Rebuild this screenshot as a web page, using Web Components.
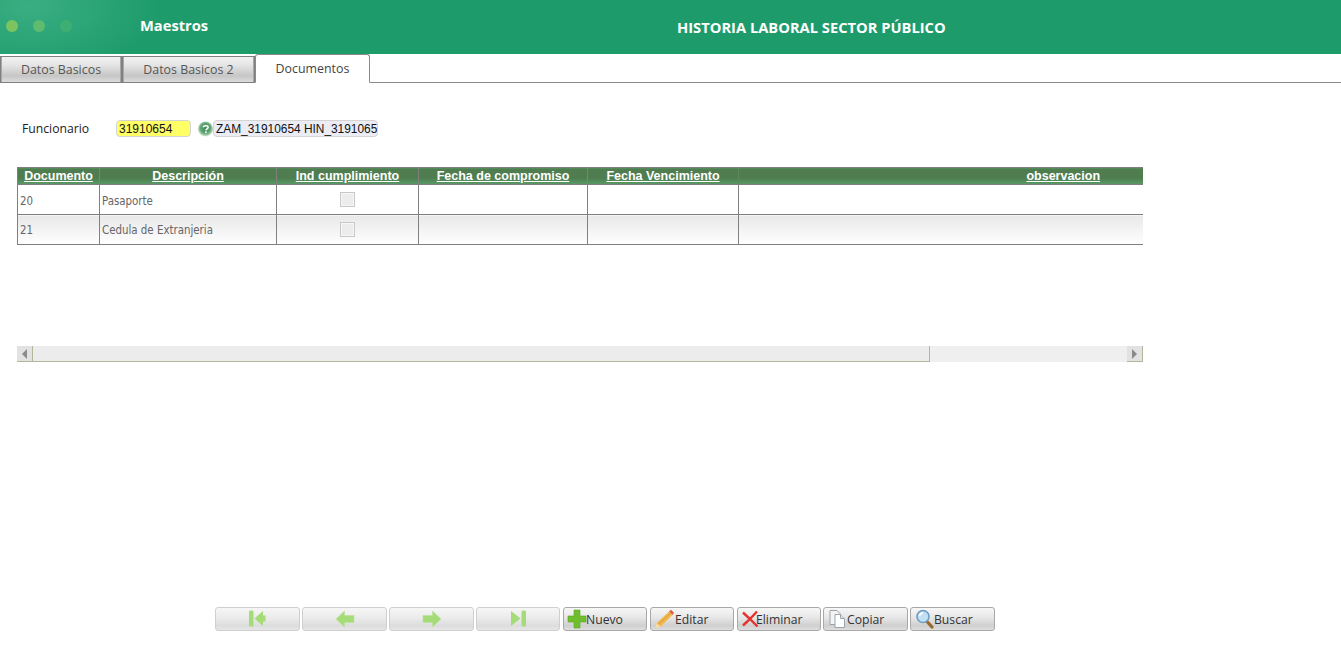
<!DOCTYPE html>
<html lang="es">
<head>
<meta charset="utf-8">
<title>Historia laboral</title>
<style>
  html, body { margin: 0; height: 100%; background: #fff; }
  body { font-family: "Noto Sans", sans-serif; overflow: hidden; }
  app-page { height: 653px; }
</style>
</head>
<body>
<app-page>
  <app-header slot="top" section="Maestros" title-text="HISTORIA LABORAL SECTOR PÚBLICO"></app-header>
  <tab-bar slot="top">
    <tab-item style="width:122px">Datos Basicos</tab-item>
    <tab-item style="width:133px">Datos Basicos 2</tab-item>
    <tab-item style="width:115px" active>Documentos</tab-item>
  </tab-bar>
  <person-field label="Funcionario" code="31910654" person="ZAM_31910654 HIN_3191065"></person-field>
  <data-grid></data-grid>
  <tool-bar slot="bottom">
    <tool-button icon="first" off></tool-button>
    <tool-button icon="prev" off></tool-button>
    <tool-button icon="next" off></tool-button>
    <tool-button icon="last" off></tool-button>
    <tool-button icon="plus">Nuevo</tool-button>
    <tool-button icon="pencil">Editar</tool-button>
    <tool-button icon="cross">Eliminar</tool-button>
    <tool-button icon="copy">Copiar</tool-button>
    <tool-button icon="search">Buscar</tool-button>
  </tool-bar>
</app-page>

<script>
class AppPage extends HTMLElement {
    constructor() {
        super();
        this.attachShadow({ mode: 'open' }).innerHTML = `
        <style>
            :host { display: flex; flex-direction: column; }
            main { flex: 1; min-height: 0; }
            footer { padding-bottom: 22px; }
        </style>
        <slot name="top"></slot>
        <main><slot></slot></main>
        <footer><slot name="bottom"></slot></footer>`;
    }
}

class AppHeader extends HTMLElement {
    constructor() {
        super();
        const section = this.getAttribute('section');
        const title = this.getAttribute('title-text');
        this.attachShadow({ mode: 'open' }).innerHTML = `
        <style>
            :host {
                display: flex;
                align-items: center;
                height: 54px;
                color: #fff;
                background:
                    radial-gradient(ellipse 130px 70px at 30px 6px, rgba(80,190,150,.55), rgba(80,190,150,0)),
                    #1e9b6b;
            }
            .dots { display: flex; gap: 15px; width: 128px; padding-left: 6px; box-sizing: border-box; margin-bottom: 2px; flex: none; }
            .dots i { width: 12px; height: 12px; border-radius: 50%; }
            .dots i:nth-child(1) { background: #7cc45f; }
            .dots i:nth-child(2) { background: #5fbb6e; }
            .dots i:nth-child(3) { background: #3fae72; }
            .section { font: 700 14.7px "Open Sans", sans-serif; width: 537px; padding-left: 12px; box-sizing: border-box; margin-bottom: 5px; flex: none; }
            h1 { margin: 0; padding-left: 12px; font: 700 14.7px "Open Sans", sans-serif; white-space: nowrap; }
        </style>
        <div class="dots"><i></i><i></i><i></i></div>
        <div class="section">${section}</div>
        <h1>${title}</h1>`;
    }
}

class TabBar extends HTMLElement {
    constructor() {
        super();
        this.attachShadow({ mode: 'open' }).innerHTML = `
        <style>
            :host {
                display: flex;
                align-items: flex-end;
                height: 29px;
                box-sizing: border-box;
                border-bottom: 1px solid #8a8a8a;
            }
        </style>
        <slot></slot>`;
    }
}

class TabItem extends HTMLElement {
    constructor() {
        super();
        this.attachShadow({ mode: 'open' }).innerHTML = `
        <style>
            :host {
                display: flex;
                align-items: center;
                justify-content: center;
                box-sizing: border-box;
                height: 27px;
                margin-bottom: -1px;
                font: 12.4px "Open Sans", sans-serif;
                color: #555;
                border: 1px solid #808080;
                box-shadow: inset 1px 0 #a8a8a8, inset -1px 0 #a8a8a8;
                background: linear-gradient(#f2f2f2, #e6e6e6 30%, #c6c6c6 75%, #dcdcdc);
            }
            :host([active]) {
                height: 29px;
                background: #fff;
                color: #444;
                border-color: #8a8a8a;
                border-bottom-color: #fff;
                border-radius: 3px 3px 0 0;
                box-shadow: none;
            }
        </style>
        <slot></slot>`;
    }
}

class PersonField extends HTMLElement {
    constructor() {
        super();
        this.attachShadow({ mode: 'open' }).innerHTML = `
        <style>
            :host {
                display: flex;
                align-items: center;
                height: 17px;
                margin: 37px 0 0 22px;
            }
            label { width: 94px; font: 12.2px "Open Sans", sans-serif; color: #222; flex: none; }
            .box {
                box-sizing: border-box;
                height: 17px;
                border: 1px solid #d4d4d4;
                border-radius: 4px;
                font: 12px/17px "Liberation Sans", sans-serif;
                color: #111;
                padding-left: 2px;
                white-space: nowrap;
                overflow: hidden;
            }
            .code { width: 75px; background: #ffff66; }
            .name { width: 165px; font-size: 11.9px; background: #ececf4; margin-left: -1px; }
            svg { margin-left: 7px; flex: none; }
        </style>
        <label>${this.getAttribute('label')}</label>
        <div class="box code">${this.getAttribute('code')}</div>
        <svg width="16" height="16" viewBox="0 0 16 16">
            <defs>
                <radialGradient id="ayuda" cx=".5" cy=".45" r=".55">
                    <stop offset="0" stop-color="#3f8f55"/>
                    <stop offset=".6" stop-color="#5fa472"/>
                    <stop offset="1" stop-color="#dcebdd"/>
                </radialGradient>
            </defs>
            <circle cx="7.500" cy="8" r="7.500" fill="url(#ayuda)"/>
            <path d="M5.300 6.300c.2-2 4.700-2.200 4.800.1 0 1.500-2.100 1.500-2.200 3" fill="none" stroke="#fff" stroke-width="1.500"/>
            <rect x="7.100" y="10.400" width="1.600" height="1.600" fill="#fff"/>
        </svg>
        <div class="box name">${this.getAttribute('person')}</div>`;
    }
}

class DataGrid extends HTMLElement {
    constructor() {
        super();
        const columnas = [
            { titulo: 'Documento', ancho: 82 },
            { titulo: 'Descripción', ancho: 177 },
            { titulo: 'Ind cumplimiento', ancho: 142 },
            { titulo: 'Fecha de compromiso', ancho: 169 },
            { titulo: 'Fecha Vencimiento', ancho: 151 },
            { titulo: 'observacion', ancho: 405 }
        ];
        const filas = [
            { doc: '20', desc: 'Pasaporte' },
            { doc: '21', desc: 'Cedula de Extranjeria' }
        ];
        const cols = columnas.map(c => `<col style="width:${c.ancho}px">`).join('');
        const heads = columnas.map(c => `<th><u>${c.titulo}</u></th>`).join('');
        const rows = filas.map(f => `
            <tr>
                <td>${f.doc}</td>
                <td>${f.desc}</td>
                <td class="chk"><span></span></td>
                <td></td><td></td><td></td>
            </tr>`).join('');
        this.attachShadow({ mode: 'open' }).innerHTML = `
        <style>
            :host { display: block; width: 1126px; margin: 30px 0 0 17px; overflow: hidden; }
            table {
                table-layout: fixed;
                border-collapse: collapse;
                width: 1126px;
                font: 11.4px "DejaVu Sans Condensed", "DejaVu Sans", sans-serif;
            }
            tr { height: 30px; }
            thead tr { height: 17px; }
            th {
                padding: 0;
                background: linear-gradient(#4f7d50, #4f7d50 60%, #5a9c68);
                color: #fff;
                font: 700 12.5px "Liberation Sans", sans-serif;
                border: 1px solid #808080;
                border-width: 1px 0 1px 1px;
            }
            th:last-child { border-left-color: #5b8a5f; text-align: center; padding-left: 244px; box-sizing: border-box; }
            td {
                padding: 1px 0 0 2px;
                color: #666;
                border: 1px solid #808080;
                border-right: 0;
                border-top: 0;
            }
            tbody tr:first-child td:not(.chk) { padding-top: 2px; }
            tbody tr:nth-child(2) td { background: linear-gradient(#e8e8e8, #fff); }
            td.chk { text-align: center; padding: 0; }
            td.chk span {
                display: inline-block;
                width: 15px;
                height: 15px;
                box-sizing: border-box;
                margin-bottom: 1px;
                vertical-align: middle;
                border: 1px solid #c8c8c8;
                background: #ececec;
                box-shadow: inset 0 0 0 1px #f6f6f6;
            }
        </style>
        <table>
            <colgroup>${cols}</colgroup>
            <thead><tr>${heads}</tr></thead>
            <tbody>${rows}</tbody>
        </table>
        <grid-scroll></grid-scroll>`;
    }
}

class GridScroll extends HTMLElement {
    constructor() {
        super();
        this.attachShadow({ mode: 'open' }).innerHTML = `
        <style>
            :host {
                display: flex;
                height: 16px;
                margin-top: 101px;
                background: #efefef;
                box-sizing: border-box;
            }
            .btn, .thumb { box-sizing: border-box; border: 1px solid #b0b89c; border-width: 0 1px 1px 0; }
            .thumb { background: #ececec; width: 897px; flex: none; }
            .btn { background: #e2e2e2; width: 16px; display: flex; align-items: center; justify-content: center; flex: none; }
            .rest { flex: 1; border-bottom: 1px solid #efefef; }
            .btn i { width: 0; height: 0; border: 5px solid transparent; }
            .l i { border-right: 5px solid #8a8a8a; border-left: 0; }
            .r i { border-left: 5px solid #8a8a8a; border-right: 0; }
        </style>
        <div class="btn l"><i></i></div>
        <div class="thumb"></div>
        <div class="rest"></div>
        <div class="btn r"><i></i></div>`;
    }
}

class ToolBar extends HTMLElement {
    constructor() {
        super();
        this.attachShadow({ mode: 'open' }).innerHTML = `
        <style>
            :host { display: grid; grid-template-columns: repeat(6, 87px) 86px 87px 87px; justify-content: start; padding-left: 215px; }
        </style>
        <slot></slot>`;
    }
}

const ICONOS = {
    first: `<rect x="1" y="1.500" width="4.500" height="16" rx="1.200" fill="#a6dc78"/><path d="M6.500 9.500 15 2v4.500h2.500v6H15V17z" fill="#a6dc78"/>`,
    prev: `<path d="M1 10 9.500 2v4.500H19v7H9.500V18z" fill="#a6dc78" stroke="#b6e292" stroke-width=".5"/>`,
    next: `<path d="M19 10 10.500 2v4.500H1v7h9.500V18z" fill="#a6dc78" stroke="#b6e292" stroke-width=".5"/>`,
    last: `<rect x="13.500" y="1.500" width="4.500" height="16" rx="1.200" fill="#a6dc78"/><path d="M12.500 9.500 3 2v15z" fill="#a6dc78"/>`,
    plus: `<path d="M7 1h6v6h6v6h-6v6H7v-6H1V7h6z" fill="#6fbe2e" stroke="#5aa525" stroke-width=".6"/>`,
    pencil: `<path d="M1.500 19l1.300-5L15 2.500l3.500 3.500L6.500 17.700z" fill="#f2b84e"/><path d="M15 2.500 17 .8l3 3-1.500 2.200z" fill="#d9604a"/><path d="M1.500 19l1.300-5 3.700 3.700z" fill="#f4dfb5"/><path d="M4 15.500 16.500 4.300" stroke="#cf8b2a" stroke-width=".7"/>`,
    cross: `<path d="M2 3.500 9 10l-7 6.500M16 2.500 9 10l7.500 7.500" fill="none" stroke="#e6332f" stroke-width="2.400"/>`,
    copy: `<path d="M3 1.500h7l3 3v11H3z" fill="#f4f4f4" stroke="#9aa4ac"/><path d="M8 5.500h5.500l4 4v9H8z" fill="#fff" stroke="#9aa4ac"/><path d="M13.500 5.500v4h4" fill="#dfe6ea" stroke="#9aa4ac"/>`,
    search: `<path d="M13 12.500l5 5.500" stroke="#9a6a2c" stroke-width="3.200" stroke-linecap="round"/><circle cx="9" cy="7.500" r="6" fill="#bfe0f5" stroke="#6f9cc4" stroke-width="1.600"/><path d="M5.500 7a4 4 0 0 1 3.500-3" fill="none" stroke="#fff" stroke-width="1.300"/>`
};

class ToolButton extends HTMLElement {
    constructor() {
        super();
        const icon = this.getAttribute('icon');
        const ancho = { last: 84, plus: 84, pencil: 84, cross: 84 }[icon] || 85;
        const ajuste = { plus: -1, pencil: 1, cross: -5 }[icon] || 0;
        this.style.width = ancho + 'px';
        this.attachShadow({ mode: 'open' }).innerHTML = `
        <style>
            :host {
                display: flex;
                align-items: center;
                box-sizing: border-box;
                height: 24px;
                padding-left: 3px;
                font: 12.2px "Open Sans", sans-serif;
                color: #333;
                border: 1px solid #a8a8a8;
                border-radius: 3px;
                background: linear-gradient(#f7f7f7, #e6e6e6 45%, #cfcfcf 80%, #dedede);
            }
            :host([off]) {
                justify-content: center;
                padding-left: 0;
                border-color: #cfcfcf;
                background: linear-gradient(#f6f6f6, #ebebeb 45%, #dddddd 80%, #e6e6e6);
            }
            svg { flex: none; margin-right: ${ajuste}px; }
        </style>
        <svg width="20" height="20" viewBox="0 0 20 20">${ICONOS[icon]}</svg>
        <slot></slot>`;
    }
}

customElements.define('app-page', AppPage);
customElements.define('app-header', AppHeader);
customElements.define('tab-bar', TabBar);
customElements.define('tab-item', TabItem);
customElements.define('person-field', PersonField);
customElements.define('grid-scroll', GridScroll);
customElements.define('data-grid', DataGrid);
customElements.define('tool-bar', ToolBar);
customElements.define('tool-button', ToolButton);
</script>
</body>
</html>
